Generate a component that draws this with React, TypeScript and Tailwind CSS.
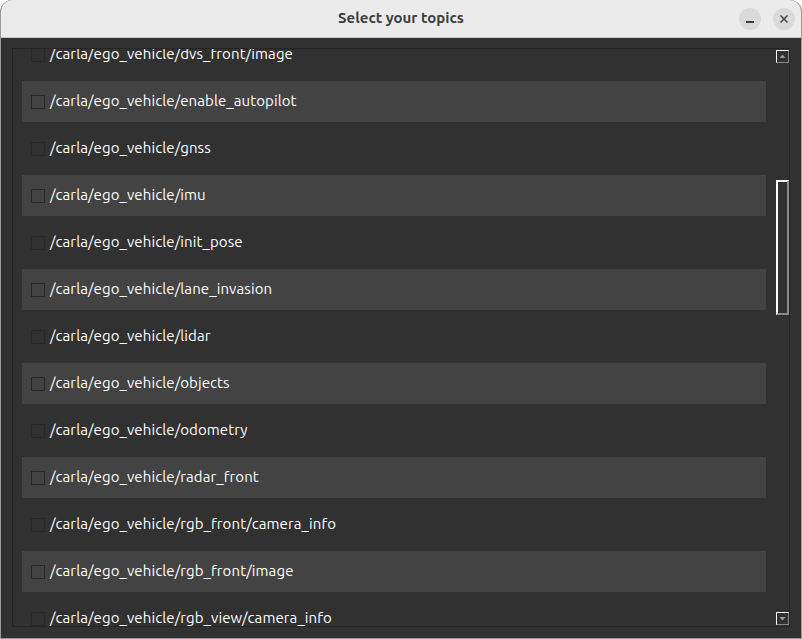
const topics = [
    'dvs_front/image',
    'enable_autopilot',
    'gnss',
    'imu',
    'init_pose',
    'lane_invasion',
    'lidar',
    'objects',
    'odometry',
    'radar_front',
    'rgb_front/camera_info',
    'rgb_front/image',
    'rgb_view/camera_info',
]

const TopicRow = ({ name, shaded }: { name: string; shaded: boolean }) => {
    return (
        <div className="h-[47px] py-[3px]">
            <div className={`flex h-[41px] items-center pl-[9px] ${shaded ? 'bg-[#434343]' : ''}`}>
                <span className="h-[14px] w-[14px] shrink-0 border border-[#282828]" />
                <span className="ml-[5px] text-[15px] tracking-[0.1px] text-white">/carla/ego_vehicle/{name}</span>
            </div>
        </div>
    )
}

const App = () => {
    return (
        <div className="h-[639px] w-[802px] bg-white font-['Ubuntu','Noto_Sans',sans-serif]">
            <div className="flex h-full flex-col overflow-hidden rounded-t-[12px] border border-t-0 border-[#9a9a9a] bg-[#313131]">
                <div className="relative flex h-[38px] shrink-0 items-center justify-center border-b border-[#c8c8c8] bg-[#ebebeb]">
                    <span className="text-[15px] font-bold text-[#3d3d3d]">Select your topics</span>
                    <div className="absolute top-[8px] right-[6px] flex gap-[12px]">
                        <button className="flex h-[22px] w-[22px] items-center justify-center rounded-full bg-[#dadada]">
                            <span className="mt-[6px] h-[1.5px] w-[8px] bg-[#3d3d3d]" />
                        </button>
                        <button className="flex h-[22px] w-[22px] items-center justify-center rounded-full bg-[#dadada]">
                            <svg width="10" height="10" viewBox="0 0 10 10">
                                <path d="M1.5 1.5 L8.5 8.5 M8.5 1.5 L1.5 8.5" stroke="#3d3d3d" strokeWidth="1.4" />
                            </svg>
                        </button>
                    </div>
                </div>
                <div className="min-h-0 flex-1 pt-[10px] pr-[11px] pb-[11px] pl-[11px]">
                    <div className="flex h-full border border-[#252525]">
                        <div className="min-h-0 flex-1 overflow-hidden">
                            <div className="-mt-[18px] pr-[10px] pl-[9px]">
                                {topics.map((t, i) => (
                                    <TopicRow key={t} name={t} shaded={i % 2 === 1} />
                                ))}
                            </div>
                        </div>
                        <div className="flex w-[13px] flex-col items-center py-px">
                            <div className="flex h-[13px] w-[13px] items-center justify-center border border-t-white border-r-[#8a8a8a] border-b-[#8a8a8a] border-l-white">
                                <svg width="7" height="5" viewBox="0 0 7 5">
                                    <path d="M3.5 0.5 L6.5 4 L0.5 4 Z" fill="#9a9a9a" />
                                </svg>
                            </div>
                            <div className="flex-1 pt-[117px]">
                                <div className="h-[135px] w-[13px] border-2 border-t-white border-r-[#8a8a8a] border-b-[#8a8a8a] border-l-white" />
                            </div>
                            <div className="flex h-[13px] w-[13px] items-center justify-center border border-t-white border-r-[#8a8a8a] border-b-[#8a8a8a] border-l-white">
                                <svg width="7" height="5" viewBox="0 0 7 5">
                                    <path d="M0.5 1 L6.5 1 L3.5 4.5 Z" fill="#9a9a9a" />
                                </svg>
                            </div>
                        </div>
                    </div>
                </div>
            </div>
        </div>
    )
}

export default App
